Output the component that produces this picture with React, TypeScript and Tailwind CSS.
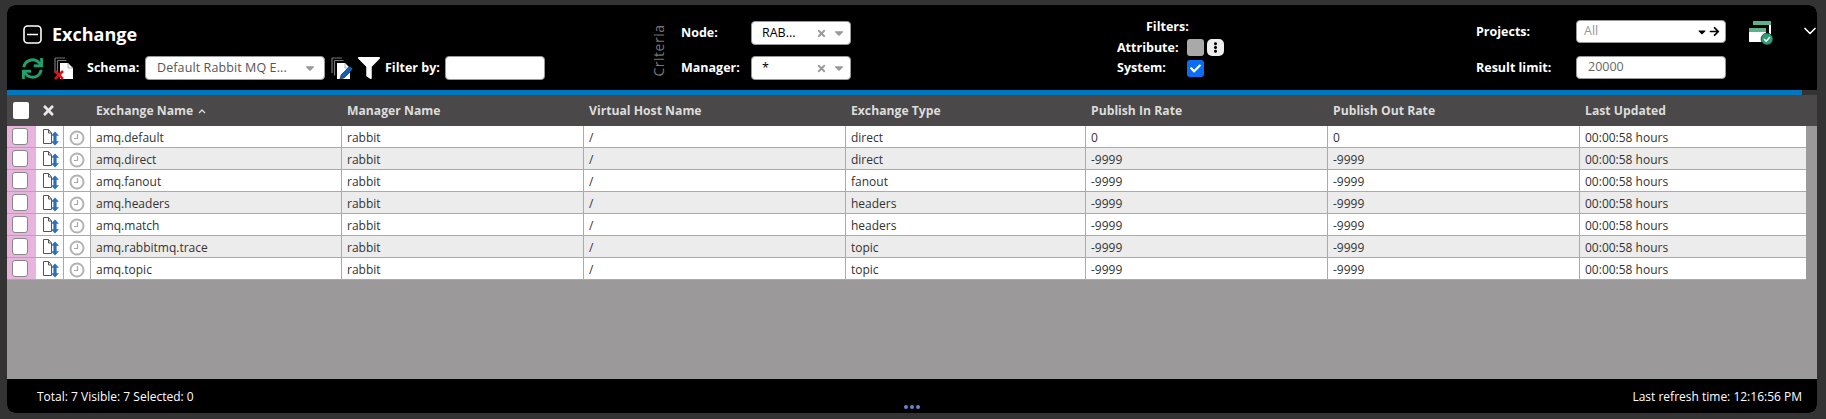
import { FaSync, FaFilter, FaTimes, FaCaretDown, FaArrowRight, FaEllipsisV, FaCheck } from "react-icons/fa";
import { LuChevronDown } from "react-icons/lu";

const FONT = { fontFamily: '"Open Sans", "Noto Sans", sans-serif' };

const rowsData = [
  ["amq.default", "direct", "0", "0"],
  ["amq.direct", "direct", "-9999", "-9999"],
  ["amq.fanout", "fanout", "-9999", "-9999"],
  ["amq.headers", "headers", "-9999", "-9999"],
  ["amq.match", "headers", "-9999", "-9999"],
  ["amq.rabbitmq.trace", "topic", "-9999", "-9999"],
  ["amq.topic", "topic", "-9999", "-9999"],
];

const GRID = "grid grid-cols-[30px_27px_27px_251px_242px_262px_240px_242px_252px_226px]";

function Stack({ children }: { children?: React.ReactNode }) {
  return (
    <svg width="26" height="26" viewBox="0 0 26 26">
      <path d="M2 3h10M2 3v15M4.500 5.500h9M4.500 5.500v15" stroke="#777" strokeWidth="1.200" fill="none" />
      <path d="M7 8h8l5 5v11H7z" fill="#fff" />
      <path d="M15 8v5h5" fill="none" stroke="#999" strokeWidth="0.800" />
      {children}
    </svg>
  );
}

function DocSwap() {
  return (
    <svg width="20" height="20" viewBox="0 0 20 20">
      <path d="M1.500 2.500h5l3 3.500v10.500h-8z M6.500 2.500v3.500h3" fill="#fff" stroke="#555" strokeWidth="1" />
      <path d="M13 4.500l4 4.200h-2.400v5.600H17l-4 4.200-4-4.200h2.400V8.700H9z" fill="#2f6fb5" />
    </svg>
  );
}

function Clock() {
  return (
    <svg width="16" height="16" viewBox="0 0 16 16" className="mt-[2px]">
      <circle cx="8" cy="8" r="6.500" fill="none" stroke="#b3b3b3" strokeWidth="2" />
      <path d="M8.500 4v4.500H5" fill="none" stroke="#a8a8a8" strokeWidth="1.200" />
    </svg>
  );
}

function Windows() {
  return (
    <svg width="26" height="26" viewBox="0 0 26 26">
      <path d="M5 1h18v4H5z" fill="#5fb08f" />
      <path d="M21 5h2v11h-2z" fill="#fff" />
      <path d="M1 8h17v4H1z" fill="#5fb08f" />
      <path d="M1 12h17v10H1z" fill="#fff" />
      <circle cx="19" cy="19" r="6" fill="#2f9a75" stroke="#111" strokeWidth="0.600" />
      <path d="M16 19l2.200 2.200L22 17" fill="none" stroke="#fff" strokeWidth="1.600" />
    </svg>
  );
}

function Label({ children, className = "" }: { children: React.ReactNode; className?: string }) {
  return <span className={`text-[12.500px] font-bold text-white leading-none ${className}`}>{children}</span>;
}

export default function App() {
  return (
    <div className="h-[419px] w-[1826px] overflow-hidden bg-[#333333] pt-[5px] pl-[7px]" style={FONT}>
      <div className="relative flex h-[408px] w-[1810px] flex-col overflow-hidden rounded-lg bg-[#9b9999]">
        {/* toolbar */}
        <div className="flex h-[85px] shrink-0 bg-black">
          {/* title + schema */}
          <div className="w-[645px] shrink-0 pl-[16px]">
            <div className="mt-[19px] flex h-[20px] items-center gap-[10px]">
              <svg width="19" height="19" viewBox="0 0 19 19">
                <rect x="1" y="1" width="17" height="17" rx="3.500" fill="none" stroke="#fff" strokeWidth="1.600" />
                <path d="M4 9.500h11" stroke="#fff" strokeWidth="1.600" />
              </svg>
              <span className="text-[18px] leading-none font-bold text-white">Exchange</span>
            </div>
            <div className="mt-[12px] flex h-[24px] items-center">
              <FaSync className="ml-[-1px] text-[21px] text-[#21a06e]" />
              <div className="ml-[10px] flex w-[34px] items-center">
                <Stack>
                  <path d="M2 16l8 8M10 16l-8 8" stroke="#d8131b" strokeWidth="2.600" />
                </Stack>
              </div>
              <Label className="w-[58px]">Schema:</Label>
              <div className="flex h-[24px] w-[180px] items-center justify-between rounded-[4px] border border-[#999] bg-white pr-[7px] pl-[11px] text-[12.500px] text-[#555]">
                <span className="tracking-[0.100px] whitespace-nowrap">Default Rabbit MQ E...</span>
                <FaCaretDown className="text-[14px] text-[#999]" />
              </div>
              <div className="ml-[5px] w-[28px]">
                <Stack>
                  <path d="M10 24l1-4 9-9 3 3-9 9z" fill="#1260b0" stroke="#000" strokeWidth="0.500" />
                </Stack>
              </div>
              <FaFilter className="text-[22px] text-white" />
              <Label className="ml-[5px] w-[60px]">Filter by:</Label>
              <div className="h-[24px] w-[100px] rounded-[4px] border border-[#999] bg-white" />
            </div>
          </div>

          {/* criteria */}
          <div className="flex w-[225px] shrink-0 pt-[16px]">
            <div className="w-[29px] shrink-0">
              <div className="flex h-[59px] w-[14px] items-center justify-center">
                <span className="-rotate-90 text-[14px] tracking-[0.500px] whitespace-nowrap text-[#777]">Criteria</span>
              </div>
            </div>
            <div className="flex flex-col gap-[11px]">
              <div className="flex h-[24px] items-center">
                <Label className="w-[70px]">Node:</Label>
                <div className="flex h-[24px] w-[100px] items-center rounded-[4px] border border-[#999] bg-white pl-[10px] text-[12.500px] text-black">
                  <span className="w-[54px]">RAB...</span>
                  <FaTimes className="text-[11px] text-[#999]" />
                  <FaCaretDown className="ml-[5px] text-[14px] text-[#999]" />
                </div>
              </div>
              <div className="flex h-[24px] items-center">
                <Label className="w-[70px]">Manager:</Label>
                <div className="flex h-[24px] w-[100px] items-center rounded-[4px] border border-[#999] bg-white pl-[10px] text-[12.500px] text-black">
                  <span className="w-[54px]">*</span>
                  <FaTimes className="text-[11px] text-[#999]" />
                  <FaCaretDown className="ml-[5px] text-[14px] text-[#999]" />
                </div>
              </div>
            </div>
          </div>

          {/* filters */}
          <div className="w-[599px] shrink-0 pt-[15px] pl-[240px]">
            <Label className="ml-[29px] block h-[15px] pt-[1px]">Filters:</Label>
            <div className="mt-[4px] flex h-[17px] items-center">
              <Label className="w-[70px] pt-[1px]">Attribute:</Label>
              <div className="h-[17px] w-[17px] rounded-[3px] bg-[#a9a9a9]" />
              <div className="ml-[3px] flex h-[17px] w-[17px] items-center justify-center rounded-[5px] bg-[#eee]">
                <FaEllipsisV className="text-[11px] text-black" />
              </div>
            </div>
            <div className="mt-[3px] flex h-[18px] items-center">
              <Label className="w-[70px]">System:</Label>
              <div className="flex h-[17px] w-[17px] items-center justify-center rounded-[3px] bg-[#0b6ef0]">
                <FaCheck className="text-[11px] text-white" />
              </div>
            </div>
          </div>

          {/* projects */}
          <div className="flex flex-1">
            <div className="flex w-[250px] shrink-0 flex-col gap-[13px] pt-[15px]">
              <div className="flex h-[23px] items-center">
                <Label className="w-[100px] pt-[2px]">Projects:</Label>
                <div className="flex h-[23px] w-[150px] items-center justify-between rounded-[4px] border border-[#999] bg-white pr-[5px] pl-[7px] text-[12.500px] text-[#999]">
                  <span>All</span>
                  <span className="flex items-center gap-[1px] text-black">
                    <FaCaretDown className="text-[12px]" />
                    <FaArrowRight className="text-[11px]" />
                  </span>
                </div>
              </div>
              <div className="flex h-[23px] items-center">
                <Label className="w-[100px] pt-[2px]">Result limit:</Label>
                <div className="flex h-[23px] w-[150px] items-center rounded-[4px] border border-[#999] bg-white pl-[11px] text-[12.500px] text-[#666]">
                  20000
                </div>
              </div>
            </div>
            <div className="ml-[22px] shrink-0 pt-[15px]">
              <Windows />
            </div>
            <div className="ml-[26px] shrink-0 pt-[16px]">
              <LuChevronDown className="text-[20px] text-white" />
            </div>
          </div>
        </div>

        {/* progress */}
        <div className="h-[5px] shrink-0 bg-[#333333]">
          <div className="h-[5px] w-[1795px] bg-[#0076bd]" />
        </div>

        {/* header */}
        <div className={`${GRID} h-[31px] shrink-0 items-center bg-[#4a4848] text-[12.200px] font-bold text-[#dcdcdc]`}>
          <div className="pl-[6px]">
            <div className="h-[17px] w-[16px] rounded-[2px] bg-white" />
          </div>
          <div className="pl-[4px]">
            <FaTimes className="text-[15px] text-[#e8e8e8]" />
          </div>
          <div />
          <div className="flex items-center gap-[5px] pt-[2px] pl-[5px]">
            Exchange Name
            <svg width="8" height="5" viewBox="0 0 8 5">
              <path d="M1 4l3-3 3 3" fill="none" stroke="#ddd" strokeWidth="1.300" />
            </svg>
          </div>
          <div className="pt-[2px] pl-[5px]">Manager Name</div>
          <div className="pt-[2px] pl-[5px]">Virtual Host Name</div>
          <div className="pt-[2px] pl-[5px]">Exchange Type</div>
          <div className="pt-[2px] pl-[5px]">Publish In Rate</div>
          <div className="pt-[2px] pl-[5px]">Publish Out Rate</div>
          <div className="pt-[2px] pl-[5px]">Last Updated</div>
        </div>

        {/* rows */}
        <div className="flex w-[1799px] flex-col">
          {rowsData.map(([name, type, inRate, outRate], i) => {
            const cell = "flex h-full items-center border-r border-[#aaaaaa] pt-[2px] pl-[5px]";
            return (
              <div
                key={name}
                className={`${GRID} h-[22px] items-center border-b border-[#aaaaaa] text-[12px] text-[#333] ${
                  i % 2 === 1 ? "bg-[#ececec]" : "bg-white"
                }`}
              >
                <div className="flex h-full items-center border-r border-white bg-[#e7b4dd] pl-[5px]">
                  <div className="h-[17px] w-[16px] rounded-[3px] border border-[#888] bg-white" />
                </div>
                <div className="flex h-full items-center border-r border-[#aaaaaa] bg-white pl-[5px]">
                  <DocSwap />
                </div>
                <div className="flex h-full items-center border-r border-[#aaaaaa] bg-white pl-[5px]">
                  <Clock />
                </div>
                <div className={cell}>{name}</div>
                <div className={cell}>rabbit</div>
                <div className={cell}>/</div>
                <div className={cell}>{type}</div>
                <div className={cell}>{inRate}</div>
                <div className={cell}>{outRate}</div>
                <div className="flex h-full items-center pt-[2px] pl-[5px]">00:00:58 hours</div>
              </div>
            );
          })}
        </div>

        <div className="flex-1" />

        {/* footer */}
        <div className="flex h-[34px] shrink-0 items-start justify-between bg-black pt-[9px] pr-[15px] pl-[30px] text-[12px] text-white">
          <span>Total: 7 Visible: 7 Selected: 0</span>
          <span>Last refresh time: 12:16:56 PM</span>
        </div>
        <div className="absolute bottom-[4px] left-[897px] flex gap-[2px]">
          <span className="h-[4px] w-[4px] rounded-full bg-[#6a82d4]" />
          <span className="h-[4px] w-[4px] rounded-full bg-[#6a82d4]" />
          <span className="h-[4px] w-[4px] rounded-full bg-[#6a82d4]" />
        </div>
      </div>
    </div>
  );
}
